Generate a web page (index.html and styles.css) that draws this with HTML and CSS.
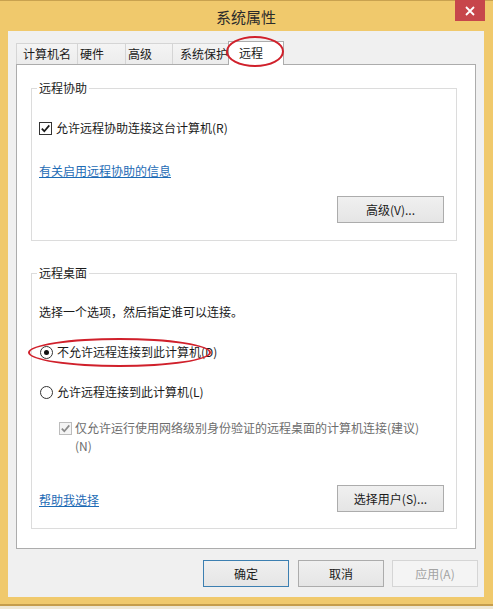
FILE: index.html
```html
<!DOCTYPE html>
<html lang="zh-CN">
<head>
    <meta charset="UTF-8">
    <meta name="viewport" content="width=device-width, initial-scale=1.0">
    <title>系统属性</title>
    <link rel="stylesheet" href="styles.css">
</head>
<body>
    <div class="window">
        <div class="titlebar">
            <span class="title">系统属性</span>
            <div class="close">
                <svg width="10" height="10" viewBox="0 0 10 10"><path d="M1 1 L9 9 M9 1 L1 9" stroke="#fff" stroke-width="1.8"/></svg>
            </div>
        </div>
        <div class="client">
            <div class="tabs">
                <div class="tab">计算机名</div>
                <div class="tab">硬件</div>
                <div class="tab">高级</div>
                <div class="tab">系统保护</div>
                <div class="tab active">远程</div>
            </div>
            <div class="panel">
                <fieldset class="group group-assist">
                    <legend>远程协助</legend>
                    <label class="option first">
                        <span class="checkbox"><svg width="11" height="11" viewBox="0 0 11 11"><path d="M1.8 5.6 L4.3 8.2 L9.3 2.4" fill="none" stroke="#1a1a1a" stroke-width="1.7"/></svg></span>
                        允许远程协助连接这台计算机(R)
                    </label>
                    <a class="link link-info" href="#">有关启用远程协助的信息</a>
                    <div class="btn-row">
                        <button class="btn">高级(V)...</button>
                    </div>
                </fieldset>
                <fieldset class="group group-desktop">
                    <legend>远程桌面</legend>
                    <p class="desc">选择一个选项，然后指定谁可以连接。</p>
                    <label class="option radio-row">
                        <span class="radio checked"></span>
                        不允许远程连接到此计算机(D)
                    </label>
                    <label class="option radio-row">
                        <span class="radio"></span>
                        允许远程连接到此计算机(L)
                    </label>
                    <label class="option sub disabled">
                        <span class="checkbox"><svg width="11" height="11" viewBox="0 0 11 11"><path d="M1.8 5.6 L4.3 8.2 L9.3 2.4" fill="none" stroke="#8a8a8a" stroke-width="1.7"/></svg></span>
                        <span>仅允许运行使用网络级别身份验证的远程桌面的计算机连接(建议)<br>(N)</span>
                    </label>
                    <div class="bottom-row">
                        <a class="link" href="#">帮助我选择</a>
                        <button class="btn">选择用户(S)...</button>
                    </div>
                </fieldset>
            </div>
            <div class="actions">
                <button class="btn btn-small default">确定</button>
                <button class="btn btn-small">取消</button>
                <button class="btn btn-small" disabled>应用(A)</button>
            </div>
        </div>

        <div class="mark mark-tab"></div>
        <div class="mark mark-radio"></div>
    </div>
</body>
</html>
```

FILE: styles.css
```css
* {
    box-sizing: border-box;
}

body {
    margin: 0;
    background: #efe8d5;
    font-family: "Noto Sans CJK SC", "Microsoft YaHei", sans-serif;
    font-size: 12px;
    color: #1a1a1a;
}

.window {
    position: relative;
    width: 493px;
    height: 606px;
    background: #f0c96c;
    border-top: 1px solid #c9a24f;
    border-bottom: 2px solid #c59d4b;
    padding: 0 9px 7px 8px;
    display: flex;
    flex-direction: column;
}

.titlebar {
    height: 30px;
    display: grid;
    grid-template-columns: 1fr auto 1fr;
}

.title {
    grid-column: 2;
    align-self: center;
    font-size: 15px;
    color: #2b2b2b;
}

.close {
    grid-column: 3;
    justify-self: end;
    width: 30px;
    height: 21px;
    margin-top: -1px;
    margin-right: -1px;
    background: #c7464b;
    display: flex;
    align-items: center;
    justify-content: center;
}

.client {
    height: 566px;
    background: #f0f0f0;
    padding: 10px 6px 0 8px;
}

/* tabs */
.tabs {
    display: flex;
    align-items: flex-end;
    height: 23px;
}

.tab {
    height: 21px;
    line-height: 20px;
    border: 1px solid #d5d5d5;
    border-bottom: none;
    background: linear-gradient(#f4f4f4, #ececec);
    margin-right: -1px;
    padding-left: 2px;
    white-space: nowrap;
    overflow: hidden;
}

.tab:nth-child(1) { width: 62px; padding-left: 6px; }
.tab:nth-child(2) { width: 49px; }
.tab:nth-child(3) { width: 48px; }
.tab:nth-child(4) { width: 57px; padding-left: 7px; }

.tab.active {
    position: relative;
    z-index: 1;
    width: 56px;
    height: 24px;
    line-height: 22px;
    margin-bottom: -1px;
    padding-left: 10px;
    background: #fff;
    border-color: #acacac;
}

.panel {
    height: 485px;
    margin-right: 2px;
    background: #fff;
    border: 1px solid #acacac;
    padding: 16px 18px 0 14px;
    display: flex;
    flex-direction: column;
    gap: 25px;
}

/* group boxes */
.group {
    margin: 0;
    min-width: 0;
    border: 1px solid #dcdcdc;
    padding: 0 12px 0 7px;
}

.group legend {
    margin-left: -2px;
    padding: 0 2px;
    line-height: 14px;
}

.group-assist {
    padding-bottom: 17px;
}

.group-desktop {
    padding-bottom: 16px;
}

.option {
    display: flex;
    align-items: center;
    gap: 4px;
    line-height: 14px;
}

.option.first {
    margin-top: 26px;
}

.checkbox {
    width: 13px;
    height: 13px;
    border: 1px solid #333;
    background: #fff;
    display: flex;
    align-items: center;
    justify-content: center;
    flex-shrink: 0;
}

.radio {
    width: 13px;
    height: 13px;
    margin-left: 1px;
    border: 1px solid #333;
    border-radius: 50%;
    background: #fff;
    display: flex;
    align-items: center;
    justify-content: center;
    flex-shrink: 0;
}

.radio.checked::after {
    content: '';
    width: 5px;
    height: 5px;
    border-radius: 50%;
    background: #111;
}

.link {
    display: block;
    width: fit-content;
    color: #1d6bb5;
    line-height: 14px;
    text-decoration: underline;
}

.link-info {
    margin-top: 29px;
}

.btn-row {
    display: flex;
    justify-content: flex-end;
    margin-top: 18px;
}

.btn {
    width: 107px;
    height: 27px;
    padding: 0;
    font-family: inherit;
    font-size: 12px;
    color: #1a1a1a;
    background: linear-gradient(#f0f0f0, #e5e5e5);
    border: 1px solid #acacac;
}

.desc {
    margin: 25px 0 0;
    line-height: 14px;
}

.radio-row {
    margin-top: 26px;
}

.option.sub {
    margin-top: 20px;
    padding-left: 20px;
    align-items: flex-start;
    gap: 3px;
    line-height: 18px;
}

.option.sub .checkbox {
    margin-top: 3px;
    border-color: #bcbcbc;
    background: #f4f4f4;
}

.disabled {
    color: #6d6d6d;
}

.bottom-row {
    margin-top: 30px;
    display: flex;
    justify-content: space-between;
    align-items: center;
}

.bottom-row .link {
    margin-top: 3px;
}

.actions {
    margin-top: 11px;
    display: flex;
    justify-content: flex-end;
    gap: 8px;
}

.btn-small {
    width: 86px;
}

.btn.default {
    border-color: #3c7fb1;
    margin-right: 1px;
}

.btn:disabled {
    color: #a3a3a3;
    background: #f4f4f4;
    border-color: #d5d5d5;
}

/* red annotation rings */
.mark {
    position: absolute;
    border: 2.5px solid #d0202b;
    border-radius: 50%;
    z-index: 2;
}

.mark-tab {
    left: 226px;
    top: 35px;
    width: 58px;
    height: 31px;
}

.mark-radio {
    left: 28px;
    top: 337px;
    width: 183px;
    height: 29px;
}
```
